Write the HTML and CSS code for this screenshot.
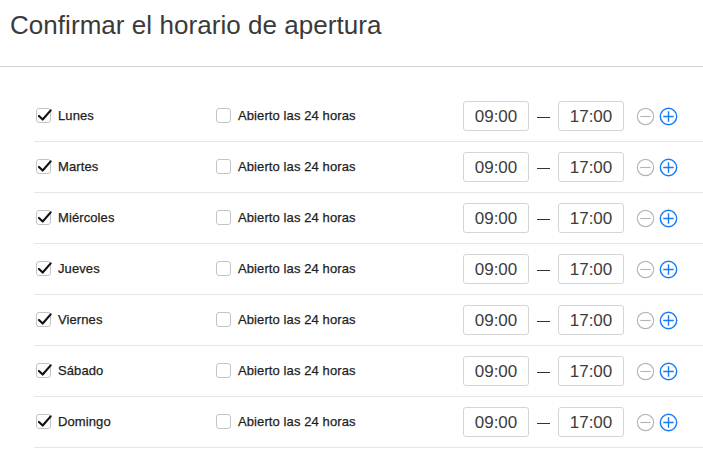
FILE: index.html
```html
<!DOCTYPE html>
<html lang="es">
<head>
<meta charset="utf-8">
<title>Confirmar el horario de apertura</title>
<link rel="stylesheet" href="styles.css">
</head>
<body>
<header class="header">
  <h1 class="title">Confirmar el horario de apertura</h1>
</header>
<main class="list">
  <div class="row">
    <label class="day"><span class="box checked"><svg viewBox="0 0 16 16"><path d="M2.8 8.4 L6.3 11.8 L13.8 3.2"/></svg></span><span>Lunes</span></label>
    <label class="allday"><span class="box"></span><span>Abierto las 24 horas</span></label>
    <div class="times"><span class="time">09:00</span><span class="dash"></span><span class="time">17:00</span></div>
    <div class="actions"><svg class="ic minus" viewBox="0 0 20 20"><circle cx="10" cy="10" r="8.6"/><path d="M4.5 10 H15.5"/></svg><svg class="ic plus" viewBox="0 0 20 20"><circle cx="10" cy="10" r="8.6"/><path d="M4.5 10 H15.5 M10 4.5 V15.5"/></svg></div>
  </div>
  <div class="row">
    <label class="day"><span class="box checked"><svg viewBox="0 0 16 16"><path d="M2.8 8.4 L6.3 11.8 L13.8 3.2"/></svg></span><span>Martes</span></label>
    <label class="allday"><span class="box"></span><span>Abierto las 24 horas</span></label>
    <div class="times"><span class="time">09:00</span><span class="dash"></span><span class="time">17:00</span></div>
    <div class="actions"><svg class="ic minus" viewBox="0 0 20 20"><circle cx="10" cy="10" r="8.6"/><path d="M4.5 10 H15.5"/></svg><svg class="ic plus" viewBox="0 0 20 20"><circle cx="10" cy="10" r="8.6"/><path d="M4.5 10 H15.5 M10 4.5 V15.5"/></svg></div>
  </div>
  <div class="row">
    <label class="day"><span class="box checked"><svg viewBox="0 0 16 16"><path d="M2.8 8.4 L6.3 11.8 L13.8 3.2"/></svg></span><span>Miércoles</span></label>
    <label class="allday"><span class="box"></span><span>Abierto las 24 horas</span></label>
    <div class="times"><span class="time">09:00</span><span class="dash"></span><span class="time">17:00</span></div>
    <div class="actions"><svg class="ic minus" viewBox="0 0 20 20"><circle cx="10" cy="10" r="8.6"/><path d="M4.5 10 H15.5"/></svg><svg class="ic plus" viewBox="0 0 20 20"><circle cx="10" cy="10" r="8.6"/><path d="M4.5 10 H15.5 M10 4.5 V15.5"/></svg></div>
  </div>
  <div class="row">
    <label class="day"><span class="box checked"><svg viewBox="0 0 16 16"><path d="M2.8 8.4 L6.3 11.8 L13.8 3.2"/></svg></span><span>Jueves</span></label>
    <label class="allday"><span class="box"></span><span>Abierto las 24 horas</span></label>
    <div class="times"><span class="time">09:00</span><span class="dash"></span><span class="time">17:00</span></div>
    <div class="actions"><svg class="ic minus" viewBox="0 0 20 20"><circle cx="10" cy="10" r="8.6"/><path d="M4.5 10 H15.5"/></svg><svg class="ic plus" viewBox="0 0 20 20"><circle cx="10" cy="10" r="8.6"/><path d="M4.5 10 H15.5 M10 4.5 V15.5"/></svg></div>
  </div>
  <div class="row">
    <label class="day"><span class="box checked"><svg viewBox="0 0 16 16"><path d="M2.8 8.4 L6.3 11.8 L13.8 3.2"/></svg></span><span>Viernes</span></label>
    <label class="allday"><span class="box"></span><span>Abierto las 24 horas</span></label>
    <div class="times"><span class="time">09:00</span><span class="dash"></span><span class="time">17:00</span></div>
    <div class="actions"><svg class="ic minus" viewBox="0 0 20 20"><circle cx="10" cy="10" r="8.6"/><path d="M4.5 10 H15.5"/></svg><svg class="ic plus" viewBox="0 0 20 20"><circle cx="10" cy="10" r="8.6"/><path d="M4.5 10 H15.5 M10 4.5 V15.5"/></svg></div>
  </div>
  <div class="row">
    <label class="day"><span class="box checked"><svg viewBox="0 0 16 16"><path d="M2.8 8.4 L6.3 11.8 L13.8 3.2"/></svg></span><span>Sábado</span></label>
    <label class="allday"><span class="box"></span><span>Abierto las 24 horas</span></label>
    <div class="times"><span class="time">09:00</span><span class="dash"></span><span class="time">17:00</span></div>
    <div class="actions"><svg class="ic minus" viewBox="0 0 20 20"><circle cx="10" cy="10" r="8.6"/><path d="M4.5 10 H15.5"/></svg><svg class="ic plus" viewBox="0 0 20 20"><circle cx="10" cy="10" r="8.6"/><path d="M4.5 10 H15.5 M10 4.5 V15.5"/></svg></div>
  </div>
  <div class="row">
    <label class="day"><span class="box checked"><svg viewBox="0 0 16 16"><path d="M2.8 8.4 L6.3 11.8 L13.8 3.2"/></svg></span><span>Domingo</span></label>
    <label class="allday"><span class="box"></span><span>Abierto las 24 horas</span></label>
    <div class="times"><span class="time">09:00</span><span class="dash"></span><span class="time">17:00</span></div>
    <div class="actions"><svg class="ic minus" viewBox="0 0 20 20"><circle cx="10" cy="10" r="8.6"/><path d="M4.5 10 H15.5"/></svg><svg class="ic plus" viewBox="0 0 20 20"><circle cx="10" cy="10" r="8.6"/><path d="M4.5 10 H15.5 M10 4.5 V15.5"/></svg></div>
  </div>
</main>
</body>
</html>
```

FILE: styles.css
```css
* { box-sizing: border-box; }
html, body { margin: 0; padding: 0; background: #fff; }
body {
  font-family: "Liberation Sans", Arial, sans-serif;
  color: #222;
  width: 703px;
  height: 452px;
  overflow: hidden;
}
.header {
  height: 67px;
  border-bottom: 1px solid #d3d3d3;
  padding: 9px 0 0 10px;
}
.title {
  margin: 0;
  font-size: 26px;
  font-weight: normal;
  color: #3a3a3a;
  line-height: 32px;
  letter-spacing: 0.05px;
}
.list {
  padding: 24px 0 0 34px;
}
.row {
  display: flex;
  align-items: center;
  height: 51px;
  border-bottom: 1px solid #e6e6e6;
}
.day, .allday {
  display: flex;
  align-items: center;
  font-size: 13px;
  color: #1e1e1e;
  -webkit-text-stroke: 0.25px #1e1e1e;
  letter-spacing: 0.1px;
  margin-top: -2px;
}
.day { width: 182px; padding-left: 2px; }
.allday { width: 247px; }
.box {
  width: 15px;
  height: 15px;
  border: 1px solid #c4c4c4;
  border-radius: 3px;
  margin-right: 7px;
  position: relative;
  flex: none;
}
.box svg {
  position: absolute;
  left: -1px;
  top: -2px;
  width: 17px;
  height: 17px;
  fill: none;
  stroke: #111;
  stroke-width: 2;
  stroke-linecap: round;
  stroke-linejoin: round;
}
.times {
  display: flex;
  align-items: center;
}
.time {
  width: 66px;
  height: 30px;
  border: 1px solid #d5d5d5;
  border-radius: 3px;
  font-size: 17px;
  color: #3c3c3c;
  display: flex;
  align-items: center;
  justify-content: center;
  padding-top: 1px;
}
.dash {
  width: 13px;
  height: 1px;
  background: #333;
  margin: 2px 8px 0 8px;
}
.actions {
  display: flex;
  align-items: center;
  gap: 4px;
  margin-left: 12px;
}
.ic {
  width: 19px;
  height: 19px;
  fill: none;
  stroke-width: 1.2;
}
.minus { stroke: #b5b5b5; }
.plus { stroke: #1a7cf5; stroke-width: 1.5; }
```
